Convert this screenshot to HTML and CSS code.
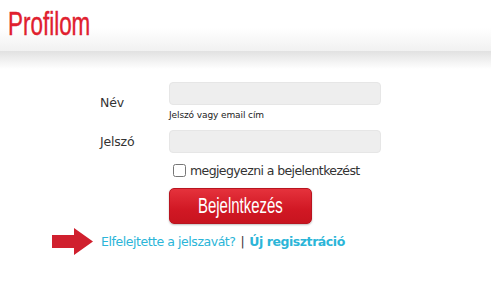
FILE: index.html
```html
<!DOCTYPE html>
<html lang="hu">
<head>
    <meta charset="UTF-8">
    <meta name="viewport" content="width=device-width, initial-scale=1.0">
    <title>Profilom</title>
    <link rel="stylesheet" href="styles.css">
</head>
<body>
    <div class="header">
        <h1><span class="narrow">Profilom</span></h1>
    </div>
    <div class="header-shadow"></div>

    <form class="login" onsubmit="return false">
        <div class="row">
            <label class="label label-low" for="name">Név</label>
            <div class="field">
                <input type="text" id="name" class="input">
                <div class="hint">Jelszó vagy email cím</div>
            </div>
        </div>
        <div class="row">
            <label class="label" for="password">Jelszó</label>
            <div class="field">
                <input type="password" id="password" class="input">
            </div>
        </div>
        <div class="row">
            <span class="label"></span>
            <label class="remember"><input type="checkbox" class="check"> megjegyezni a bejelentkezést</label>
        </div>
        <div class="row">
            <span class="label"></span>
            <button class="login-btn"><span class="narrow btn-text">Bejelntkezés</span></button>
        </div>
        <div class="links">
            <svg class="arrow" width="41" height="27" viewBox="0 0 41 27">
                <polygon points="0,7 22,7 22,0 41,13.5 22,27 22,20 0,20" fill="#d0202e"/>
            </svg>
            <a href="#" class="link">Elfelejtette a jelszavát?</a>
            <span class="sep">|</span>
            <a href="#" class="link link-bold">Új regisztráció</a>
        </div>
    </form>
</body>
</html>
```

FILE: styles.css
```css
body {
    margin: 0;
    font-family: "DejaVu Sans", Verdana, sans-serif;
    background-color: #fff;
    color: #333;
}
.narrow {
    display: inline-block;
    transform: scaleX(0.68);
    transform-origin: left center;
}
.header {
    height: 51px;
    padding-left: 8px;
    background: linear-gradient(#fff 55%, #f1f1f1);
    box-sizing: border-box;
}
h1 {
    margin: 0;
    padding-top: 6px;
    font-family: "Liberation Sans", Arial, sans-serif;
    font-weight: normal;
    font-size: 33px;
    line-height: 36px;
    color: #e0202e;
    -webkit-text-stroke: 0.4px #e0202e;
}
.header-shadow {
    height: 18px;
    background: linear-gradient(#e1e1e1, #fff);
}
.login {
    padding-left: 100px;
    padding-top: 13px;
}
.row {
    display: flex;
    align-items: flex-start;
}
.label {
    width: 69px;
    flex-shrink: 0;
    font-size: 12.5px;
    line-height: 23px;
    letter-spacing: -0.2px;
}
.label-low {
    padding-top: 9px;
}
.field {
    width: 212px;
    margin-bottom: 10px;
}
.input {
    display: block;
    width: 212px;
    height: 23px;
    box-sizing: border-box;
    border: 1px solid #e6e6e6;
    border-radius: 4px;
    background-color: #eee;
}
.hint {
    font-size: 9px;
    margin-top: 5px;
    color: #222;
    letter-spacing: -0.1px;
}
.remember {
    display: flex;
    align-items: center;
    gap: 4px;
    font-size: 12.5px;
    letter-spacing: -0.6px;
    margin-left: 4px;
}
.check {
    margin: 0;
    width: 13px;
    height: 13px;
}
.login-btn {
    margin-top: 10px;
    width: 143px;
    height: 36px;
    padding: 0;
    border: 1px solid #b8141f;
    border-radius: 5px;
    background: linear-gradient(#e5323c, #d11824 60%, #c8141f);
    box-shadow: 0 1px 2px rgba(0,0,0,0.25);
    color: #fff;
    font-family: "Liberation Sans", Arial, sans-serif;
    font-size: 22px;
    cursor: pointer;
}
.btn-text {
    transform-origin: center center;
}
.links {
    display: flex;
    align-items: center;
    margin-left: -48px;
    margin-top: 4px;
    font-size: 12.5px;
    letter-spacing: -0.45px;
}
.arrow {
    margin-right: 8px;
}
.link {
    color: #2bb5d8;
    text-decoration: none;
}
.link-bold {
    font-weight: bold;
}
.sep {
    margin: 0 5px;
    color: #333;
}
```
